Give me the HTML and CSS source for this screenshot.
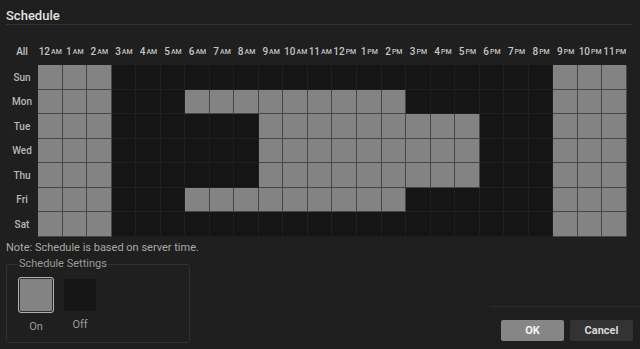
FILE: index.html
```html
<!DOCTYPE html>
<html>
<head>
  <title>Schedule</title>
  <meta charset="UTF-8">
  <meta name="viewport" content="width=device-width, initial-scale=1.0">
  <link rel="stylesheet" href="styles.css">
</head>
<body>
  <div class="dialog">
    <div class="title">Schedule</div>

    <div id="schedule" class="schedule">
      <!-- header and rows are built by schedule.js -->
    </div>

    <div class="note">Note: Schedule is based on server time.</div>

    <div class="bottom">
      <fieldset class="settings">
        <legend>Schedule Settings</legend>
        <div class="swatches">
          <div class="swatch-item">
            <div class="swatch on selected"></div>
            <span>On</span>
          </div>
          <div class="swatch-item">
            <div class="swatch off"></div>
            <span>Off</span>
          </div>
        </div>
      </fieldset>

      <div class="footer">
        <button class="btn primary">OK</button>
        <button class="btn">Cancel</button>
      </div>
    </div>
  </div>

  <script src="schedule.js"></script>
</body>
</html>
```

FILE: styles.css
```css
body {
  font-family: Roboto, "Liberation Sans", sans-serif;
  margin: 0;
  padding: 0;
  width: 640px;
  height: 349px;
  overflow: hidden;
  background-color: #1f1f1f;
  color: #d0d0d0;
}

.dialog {
  display: flex;
  flex-direction: column;
  height: 349px;
}

.title {
  margin-left: 6px;
  width: 626px;
  height: 25px;
  padding-top: 8px;
  box-sizing: border-box;
  border-bottom: 1px solid #333333;
  font-size: 13px;
  font-weight: 500;
  line-height: 16px;
  color: #e2e2e2;
}

.schedule {
  display: grid;
  grid-template-columns: 32px repeat(24, 1fr);
  grid-template-rows: 26px repeat(7, 24.5px);
  width: 621px;
  margin-left: 6px;
  margin-top: 14px;
}

.col-label, .row-label {
  display: flex;
  align-items: center;
  justify-content: center;
  font-size: 10px;
  font-weight: 500;
  color: #c4c4c4;
  white-space: nowrap;
}

.col-label {
  align-items: flex-start;
  padding-top: 7px;
  line-height: 12px;
}

.col-label small {
  font-size: 7px;
  margin-left: 1px;
}

.row-label {
  color: #b8b8b8;
}

.cell {
  background-color: #151515;
  border-right: 1px solid #1f1f1f;
  border-bottom: 1px solid #1f1f1f;
}

.cell.on {
  background-color: #838383;
  border-right-color: #474747;
  border-bottom-color: #474747;
}

.note {
  margin: 4px 0 0 6px;
  font-size: 11px;
  line-height: 14px;
  color: #a8a8a8;
}

.bottom {
  display: flex;
  align-items: flex-end;
  justify-content: space-between;
  margin-top: auto;
}

.settings {
  width: 184px;
  height: 86px;
  box-sizing: border-box;
  margin: 0 0 6px 6px;
  padding: 6px 0 0 11px;
  border: 1px solid #313131;
  border-radius: 3px;
}

.settings legend {
  padding: 0 1px;
  font-size: 11px;
  line-height: 14px;
  color: #9a9a9a;
}

.swatches {
  display: flex;
  gap: 10px;
}

.swatch-item {
  display: flex;
  flex-direction: column;
  align-items: center;
  font-size: 11px;
  color: #9a9a9a;
}

.swatch-item span {
  margin-top: 7px;
}

.swatch {
  width: 32px;
  height: 32px;
  margin-top: 2px;
}

.swatch.on {
  background-color: #838383;
}

.swatch.off {
  background-color: #151515;
}

.swatch.selected {
  width: 34px;
  height: 34px;
  margin-top: 0;
  border: 1px solid #b0b0b0;
  border-radius: 3px;
  box-shadow: inset 0 0 0 1px #2e2e2e;
}

.footer {
  display: flex;
  justify-content: flex-end;
  gap: 6px;
  width: 150px;
  border-top: 1px solid #2c2c2c;
  padding: 13px 7px 8px 0;
  box-sizing: border-box;
}

.btn {
  width: 63px;
  height: 21px;
  padding: 0;
  border: none;
  border-radius: 2px;
  background-color: #333333;
  color: #d8d8d8;
  font-family: Roboto, "Liberation Sans", sans-serif;
  font-size: 11px;
  font-weight: 700;
  cursor: pointer;
}

.btn.primary {
  background-color: #868686;
  color: #f4f4f4;
}
```

FILE: schedule.js
```js
var days = ['Sun', 'Mon', 'Tue', 'Wed', 'Thu', 'Fri', 'Sat'];

// hours that are switched on, per day
var onHours = [
  [0, 1, 2, 21, 22, 23],
  [0, 1, 2, 6, 7, 8, 9, 10, 11, 12, 13, 14, 21, 22, 23],
  [0, 1, 2, 9, 10, 11, 12, 13, 14, 15, 16, 17, 21, 22, 23],
  [0, 1, 2, 9, 10, 11, 12, 13, 14, 15, 16, 17, 21, 22, 23],
  [0, 1, 2, 9, 10, 11, 12, 13, 14, 15, 16, 17, 21, 22, 23],
  [0, 1, 2, 6, 7, 8, 9, 10, 11, 12, 13, 14, 21, 22, 23],
  [0, 1, 2, 21, 22, 23]
];

var grid = document.getElementById('schedule');

function addLabel(cls, html) {
  var el = document.createElement('div');
  el.className = cls;
  el.innerHTML = html;
  grid.appendChild(el);
}

addLabel('col-label', 'All');
for (var h = 0; h < 24; h++) {
  var num = h % 12 === 0 ? 12 : h % 12;
  var suffix = h < 12 ? 'AM' : 'PM';
  addLabel('col-label', num + '<small>' + suffix + '</small>');
}

for (var d = 0; d < days.length; d++) {
  addLabel('row-label', days[d]);
  for (var i = 0; i < 24; i++) {
    var cell = document.createElement('div');
    cell.className = onHours[d].indexOf(i) >= 0 ? 'cell on' : 'cell';
    grid.appendChild(cell);
  }
}
```
